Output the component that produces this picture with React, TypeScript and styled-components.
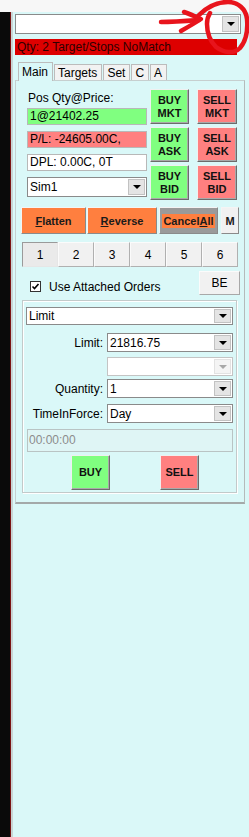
import React from "react"
import styled, { createGlobalStyle } from "styled-components"

const GlobalStyle = createGlobalStyle`
  html, body {
    margin: 0;
    padding: 0;
    background: #daf8f8;
  }
  body {
    font-family: "Liberation Sans", Arial, sans-serif;
    font-size: 12px;
    color: #000;
  }
`

const Screen = styled.div`
  position: relative;
  width: 249px;
  height: 837px;
  display: flex;
  flex-direction: column;
  overflow: hidden;
`

const TopStrip = styled.div`
  height: 12px;
  background: #f7f7f7;
`

const Body = styled.div`
  flex: 1;
  display: flex;
`

const LeftEdge = styled.div`
  width: 10px;
  background: #0a0a0a;
  border-right: 1px solid #7a1414;
`

const Panel = styled.div`
  flex: 1;
  background: #daf8f8;
  border-left: 2px solid #c9d4d4;
  padding: 2px 0 0 2px;
  display: flex;
  flex-direction: column;
`

const Combo = styled.div<{ $width: number; $height: number; $disabled?: boolean }>`
  box-sizing: border-box;
  width: ${({ $width }) => $width}px;
  height: ${({ $height }) => $height}px;
  display: flex;
  align-items: stretch;
  background: #fff;
  border: 1px solid ${({ $disabled }) => ($disabled ? "#c4c4c4" : "#8a8a8a")};
`

const ComboText = styled.span`
  flex: 1;
  display: flex;
  align-items: center;
  padding-left: 2px;
  white-space: nowrap;
`

const DropButton = styled.span<{ $disabled?: boolean }>`
  width: 15px;
  margin: 1px;
  background: ${({ $disabled }) => ($disabled ? "#f4f4f4" : "#e4e4e4")};
  border: 1px solid ${({ $disabled }) => ($disabled ? "#e2e2e2" : "#c2c2c2")};
  display: flex;
  align-items: center;
  justify-content: center;
`

const Arrow = styled.span<{ $disabled?: boolean }>`
  width: 0;
  height: 0;
  border-left: 4px solid transparent;
  border-right: 4px solid transparent;
  border-top: 4px solid ${({ $disabled }) => ($disabled ? "#a8a8a8" : "#000")};
`

const StatusBar = styled.div`
  margin-top: 5px;
  width: 222px;
  height: 16px;
  line-height: 16px;
  padding-left: 2px;
  box-sizing: border-box;
  background: #dd0000;
  color: #2e0000;
  font-size: 12px;
  white-space: nowrap;
`

const TabStrip = styled.div`
  margin-top: 6px;
  display: flex;
  align-items: flex-end;
  height: 19px;
  padding-left: 3px;
`

const Tab = styled.div<{ $active?: boolean }>`
  box-sizing: border-box;
  height: ${({ $active }) => ($active ? 19 : 16)}px;
  line-height: ${({ $active }) => ($active ? 18 : 16)}px;
  padding: 0 4px 0 3px;
  border: 1px solid #bcbcbc;
  border-bottom: none;
  margin-right: 1px;
  background: ${({ $active }) => ($active ? "#daf8f8" : "#f2f2f2")};
  position: relative;
  z-index: ${({ $active }) => ($active ? 1 : 0)};
  margin-bottom: ${({ $active }) => ($active ? -1 : 0)}px;
`

const TabPage = styled.div`
  width: 230px;
  box-sizing: border-box;
  border: 1px solid #c6cfcf;
  border-bottom: 2px solid #a4a9a9;
  border-right: 1px solid #b4bbbb;
  padding-bottom: 9px;
  display: flex;
  flex-direction: column;
`

const TopSection = styled.div`
  margin-top: 8px;
  padding-left: 11px;
  display: flex;
  gap: 3px;
`

const FieldColumn = styled.div`
  width: 120px;
  display: flex;
  flex-direction: column;
`

const FieldLabel = styled.div`
  margin-top: 2px;
  height: 15px;
  line-height: 15px;
  padding-left: 1px;
`

const Field = styled.div<{ $bg: string; $top: number }>`
  box-sizing: border-box;
  margin-top: ${({ $top }) => $top}px;
  height: 17px;
  line-height: 15px;
  padding-left: 2px;
  border: 1px solid #b8b8b8;
  background: ${({ $bg }) => $bg};
  white-space: nowrap;
`

const ComboSlot = styled.div`
  margin-top: 6px;
`

const ButtonColumn = styled.div<{ $gapLeft?: number }>`
  display: flex;
  flex-direction: column;
  gap: 3px;
  margin-left: ${({ $gapLeft }) => $gapLeft ?? 0}px;
`

const TradeButton = styled.div<{ $bg: string; $w: number; $h: number }>`
  box-sizing: border-box;
  width: ${({ $w }) => $w}px;
  height: ${({ $h }) => $h}px;
  background: ${({ $bg }) => $bg};
  border: 1px solid;
  border-color: #f0f0f0 #6c6c6c #6c6c6c #f0f0f0;
  box-shadow: inset -1px -1px 0 #a9a9a9;
  display: flex;
  flex-direction: column;
  align-items: center;
  justify-content: center;
  font-size: 11px;
  font-weight: bold;
  line-height: 13px;
  color: #111;
`

const ActionRow = styled.div`
  margin-top: 7px;
  padding-left: 5px;
  display: flex;
`

const ActionButton = styled.div<{ $bg: string; $w: number; $gap: number }>`
  box-sizing: border-box;
  width: ${({ $w }) => $w}px;
  height: 27px;
  margin-right: ${({ $gap }) => $gap}px;
  background: ${({ $bg }) => $bg};
  border: 1px solid;
  border-color: #f4f4f4 #8a8a8a #8a8a8a #f4f4f4;
  display: flex;
  align-items: center;
  justify-content: center;
  font-size: 11px;
  font-weight: bold;
  color: #1a1a1a;
`

const Highlight = styled.span`
  background: #ff7f3f;
  padding: 1px 1px;
`

const NumberRow = styled.div`
  margin-top: 8px;
  padding-left: 6px;
  display: flex;
`

const NumberTab = styled.div<{ $active?: boolean }>`
  box-sizing: border-box;
  width: 36px;
  height: 25px;
  display: flex;
  align-items: center;
  justify-content: center;
  font-size: 12px;
  background: ${({ $active }) => ($active ? "#eaeaea" : "#f1f1f1")};
  border: 1px solid;
  border-color: ${({ $active }) =>
    $active ? "#9a9a9a #e6e6e6 #e6e6e6 #9a9a9a" : "#fbfbfb #b0b0b0 #b0b0b0 #fbfbfb"};
`

const CheckRow = styled.div`
  margin-top: 4px;
  padding: 0 4px 0 14px;
  height: 24px;
  display: flex;
  align-items: center;
`

const CheckBox = styled.span`
  box-sizing: border-box;
  width: 11px;
  height: 11px;
  margin-top: 6px;
  border: 1px solid #333;
  background: #fff;
  display: flex;
  align-items: center;
  justify-content: center;
`

const CheckLabel = styled.span`
  margin-left: 8px;
  margin-top: 7px;
`

const SmallButton = styled.div`
  box-sizing: border-box;
  margin-left: auto;
  width: 41px;
  height: 24px;
  background: #f1f1f1;
  border: 1px solid;
  border-color: #fbfbfb #a8a8a8 #a8a8a8 #fbfbfb;
  display: flex;
  align-items: center;
  justify-content: center;
  font-size: 12px;
`

const GroupBox = styled.div`
  margin: 5px 0 0 6px;
  width: 215px;
  box-sizing: border-box;
  border: 1px solid #c2caca;
  box-shadow: inset 1px 1px 0 #fff, 1px 1px 0 #fff;
  padding: 6px 3px 2px 3px;
  display: flex;
  flex-direction: column;
`

const FormRow = styled.div<{ $top: number }>`
  margin-top: ${({ $top }) => $top}px;
  display: flex;
  align-items: center;
`

const FormLabel = styled.span`
  width: 77px;
  text-align: right;
  margin-right: 4px;
`

const TimeField = styled.div`
  box-sizing: border-box;
  margin: 6px 0 0 1px;
  width: 206px;
  height: 23px;
  padding: 3px 0 0 1px;
  background: #dff5f5;
  border: 1px solid #b9c4c4;
  color: #8c8c8c;
`

const OrderButtons = styled.div`
  margin-top: 3px;
  padding-left: 45px;
  display: flex;
  gap: 50px;
`

const Annotation = styled.svg`
  position: absolute;
  left: 0;
  top: 0;
  pointer-events: none;
`

const DropCombo = ({
  text,
  width,
  height,
  disabled,
}: {
  text: string
  width: number
  height: number
  disabled?: boolean
}) => (
  <Combo $width={width} $height={height} $disabled={disabled}>
    <ComboText>{text}</ComboText>
    <DropButton $disabled={disabled}>
      <Arrow $disabled={disabled} />
    </DropButton>
  </Combo>
)

const GREEN = "#80ff80"
const RED = "#ff8080"
const ORANGE = "#ff7f3f"

export default function App() {
  return (
    <Screen>
      <GlobalStyle />
      <TopStrip />
      <Body>
        <LeftEdge />
        <Panel>
          <DropCombo text="" width={226} height={20} />
          <StatusBar>Qty: 2 Target/Stops NoMatch</StatusBar>
          <TabStrip>
            <Tab $active>Main</Tab>
            <Tab>Targets</Tab>
            <Tab>Set</Tab>
            <Tab>C</Tab>
            <Tab>A</Tab>
          </TabStrip>
          <TabPage>
            <TopSection>
              <FieldColumn>
                <FieldLabel>Pos Qty@Price:</FieldLabel>
                <Field $bg={GREEN} $top={2}>1@21402.25</Field>
                <Field $bg={RED} $top={6}>P/L: -24605.00C,</Field>
                <Field $bg="#fff" $top={6}>DPL: 0.00C, 0T</Field>
                <ComboSlot>
                  <DropCombo text="Sim1" width={120} height={20} />
                </ComboSlot>
              </FieldColumn>
              <ButtonColumn>
                <TradeButton $bg={GREEN} $w={39} $h={35}><span>BUY</span><span>MKT</span></TradeButton>
                <TradeButton $bg={GREEN} $w={39} $h={35}><span>BUY</span><span>ASK</span></TradeButton>
                <TradeButton $bg={GREEN} $w={39} $h={35}><span>BUY</span><span>BID</span></TradeButton>
              </ButtonColumn>
              <ButtonColumn $gapLeft={5}>
                <TradeButton $bg={RED} $w={40} $h={35}><span>SELL</span><span>MKT</span></TradeButton>
                <TradeButton $bg={RED} $w={40} $h={35}><span>SELL</span><span>ASK</span></TradeButton>
                <TradeButton $bg={RED} $w={40} $h={35}><span>SELL</span><span>BID</span></TradeButton>
              </ButtonColumn>
            </TopSection>

            <ActionRow>
              <ActionButton $bg={ORANGE} $w={65} $gap={1}><u>F</u>latten</ActionButton>
              <ActionButton $bg={ORANGE} $w={70} $gap={2}><u>R</u>everse</ActionButton>
              <ActionButton $bg="#9a9a9a" $w={59} $gap={3}>
                <Highlight>Cancel<u>A</u>ll</Highlight>
              </ActionButton>
              <ActionButton $bg="#f1f1f1" $w={18} $gap={0}>M</ActionButton>
            </ActionRow>

            <NumberRow>
              {["1", "2", "3", "4", "5", "6"].map((n) => (
                <NumberTab key={n} $active={n === "1"}>{n}</NumberTab>
              ))}
            </NumberRow>

            <CheckRow>
              <CheckBox>
                <svg width="9" height="9" viewBox="0 0 9 9">
                  <polyline points="1.5,4.5 3.5,6.5 7.5,2" fill="none" stroke="#000" strokeWidth="1.6" />
                </svg>
              </CheckBox>
              <CheckLabel>Use Attached Orders</CheckLabel>
              <SmallButton>BE</SmallButton>
            </CheckRow>

            <GroupBox>
              <DropCombo text="Limit" width={207} height={18} />
              <FormRow $top={8}>
                <FormLabel>Limit:</FormLabel>
                <DropCombo text="21816.75" width={126} height={19} />
              </FormRow>
              <FormRow $top={5}>
                <FormLabel />
                <DropCombo text="" width={126} height={19} disabled />
              </FormRow>
              <FormRow $top={3}>
                <FormLabel>Quantity:</FormLabel>
                <DropCombo text="1" width={126} height={19} />
              </FormRow>
              <FormRow $top={6}>
                <FormLabel>TimeInForce:</FormLabel>
                <DropCombo text="Day" width={126} height={19} />
              </FormRow>
              <TimeField>00:00:00</TimeField>
              <OrderButtons>
                <TradeButton $bg={GREEN} $w={39} $h={35}>BUY</TradeButton>
                <TradeButton $bg={RED} $w={39} $h={35}>SELL</TradeButton>
              </OrderButtons>
            </GroupBox>
          </TabPage>
        </Panel>
      </Body>

      <Annotation width="249" height="60" viewBox="0 0 249 60">
        <g fill="none" stroke="#e8141c" strokeWidth="4.5" strokeLinecap="round" strokeLinejoin="round">
          <path d="M161 22 C 172 22, 186 21, 199 20" />
          <path d="M184 12 C 190 14, 196 17, 201 19 C 195 23, 188 27, 181 31" />
          <path d="M199 15 C 207 7, 217 2, 228 2 C 238 2, 246 9, 247 19 C 248 30, 246 41, 240 48 C 234 54, 224 53, 216 47 C 210 41, 207 32, 207 24 C 207 19, 208 16, 210 13" />
        </g>
      </Annotation>
    </Screen>
  )
}
